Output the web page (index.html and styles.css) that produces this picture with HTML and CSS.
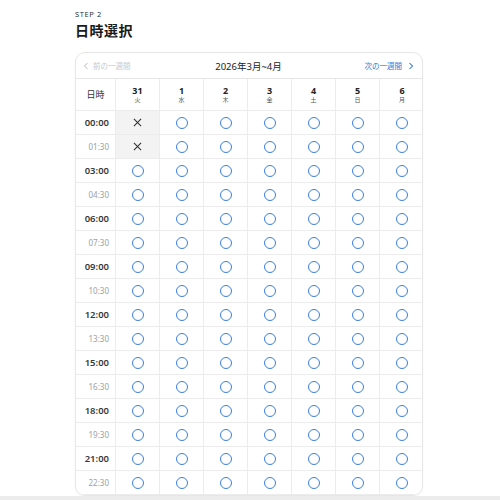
FILE: index.html
```html
<!DOCTYPE html>
<html lang="ja">
<head>
<meta charset="utf-8">
<link rel="stylesheet" href="styles.css">
</head>
<body>
<main class="page">
  <div class="step">STEP 2</div>
  <h1 class="title">日時選択</h1>
  <section class="card">
    <div class="nav">
      <span class="nav-prev"><svg class="chev" viewBox="0 0 8 10" width="6" height="8"><path d="M6 1 L2 5 L6 9" fill="none" stroke="currentColor" stroke-width="1.4"/></svg>前の一週間</span>
      <span class="nav-title">2026年3月~4月</span>
      <span class="nav-next">次の一週間<svg class="chev" viewBox="0 0 8 10" width="6" height="8"><path d="M2 1 L6 5 L2 9" fill="none" stroke="currentColor" stroke-width="1.4"/></svg></span>
    </div>
    <div class="grid" id="grid">
      <div class="hcell corner">日時</div>
      <div class="hcell"><b>31</b><small>火</small></div>
      <div class="hcell"><b>1</b><small>水</small></div>
      <div class="hcell"><b>2</b><small>木</small></div>
      <div class="hcell"><b>3</b><small>金</small></div>
      <div class="hcell"><b>4</b><small>土</small></div>
      <div class="hcell"><b>5</b><small>日</small></div>
      <div class="hcell"><b>6</b><small>月</small></div>
    </div>
  </section>
</main>
<script src="script.js"></script>
</body>
</html>
```
FILE: script.js
```js
(function () {
  var times = ["00:00","01:30","03:00","04:30","06:00","07:30","09:00","10:30","12:00","13:30","15:00","16:30","18:00","19:30","21:00","22:30"];
  var grid = document.getElementById("grid");
  var html = "";
  times.forEach(function (t, r) {
    var major = t.slice(3) === "00";
    html += '<div class="tcell' + (major ? ' major' : ' minor') + '">' + t + '</div>';
    for (var c = 0; c < 7; c++) {
      if (c === 0 && r < 2) {
        html += '<div class="cell closed"><svg viewBox="0 0 10 10" width="9" height="9"><path d="M1 1 L9 9 M9 1 L1 9" stroke="#333" stroke-width="1.2"/></svg></div>';
      } else {
        html += '<div class="cell"><span class="ok"></span></div>';
      }
    }
  });
  grid.insertAdjacentHTML("beforeend", html);
})();
```
FILE: styles.css
```css
html, body {
  margin: 0;
  padding: 0;
  background: #fff;
  height: 500px;
  overflow: hidden;
}
body {
  font-family: "Noto Sans", "Noto Sans CJK JP", sans-serif;
  color: #222;
  position: relative;
}
body::after {
  content: "";
  position: absolute;
  left: 0;
  right: 0;
  top: 496px;
  height: 4px;
  background: #ececec;
}
.page {
  width: 348px;
  margin: 0 auto;
  padding-top: 9px;
  padding-right: 2px;
}
.step {
  font-size: 7.5px;
  line-height: 10px;
  letter-spacing: 0.6px;
  color: #333;
}
.title {
  margin: 2px 0 0;
  font-size: 14px;
  line-height: 20px;
  font-weight: 700;
  color: #1a1a1a;
  letter-spacing: 0.5px;
}
.card {
  margin-top: 11px;
  border: 1px solid #e6e6e6;
  border-radius: 10px;
  overflow: hidden;
  box-shadow: 0 1px 3px rgba(0,0,0,0.04);
}
.nav {
  height: 25px;
  border-bottom: 1px solid #e6e6e6;
  display: flex;
  align-items: center;
  justify-content: space-between;
  padding: 0 8px 0 7px;
}
.nav-prev {
  font-size: 7.5px;
  color: #c9c9c9;
  display: flex;
  align-items: center;
  gap: 4px;
  width: 80px;
}
.nav-title {
  font-size: 9.5px;
  color: #222;
}
.nav-next {
  font-size: 7.5px;
  color: #2f74d8;
  display: flex;
  align-items: center;
  justify-content: flex-end;
  gap: 6px;
  width: 80px;
}
.grid {
  display: grid;
  grid-template-columns: 40px repeat(7, 44px);
  grid-template-rows: 32px;
  grid-auto-rows: 24px;
}
.hcell, .tcell, .cell {
  border-right: 1px solid #ececec;
  border-bottom: 1px solid #ececec;
  box-sizing: border-box;
}
.grid > :nth-child(8n) {
  border-right: none;
}
.hcell {
  display: flex;
  flex-direction: column;
  align-items: center;
  justify-content: center;
}
.hcell b {
  font-size: 9px;
  line-height: 11px;
  font-weight: 700;
  color: #222;
}
.hcell small {
  font-size: 6px;
  line-height: 9px;
  color: #555;
}
.corner {
  font-size: 9px;
  color: #333;
}
.tcell {
  display: flex;
  align-items: center;
  justify-content: flex-end;
  padding-right: 6px;
}
.tcell.major {
  font-size: 9.5px;
  font-weight: 600;
  color: #3a3a3a;
}
.tcell.minor {
  font-size: 8px;
  color: #a0a0a0;
}
.cell {
  display: flex;
  align-items: center;
  justify-content: center;
}
.cell.closed {
  background: #f3f3f3;
}
.ok {
  width: 12px;
  height: 12px;
  box-sizing: border-box;
  border: 1.6px solid #3a7ee0;
  border-radius: 50%;
}
.chev {
  display: block;
}
```
